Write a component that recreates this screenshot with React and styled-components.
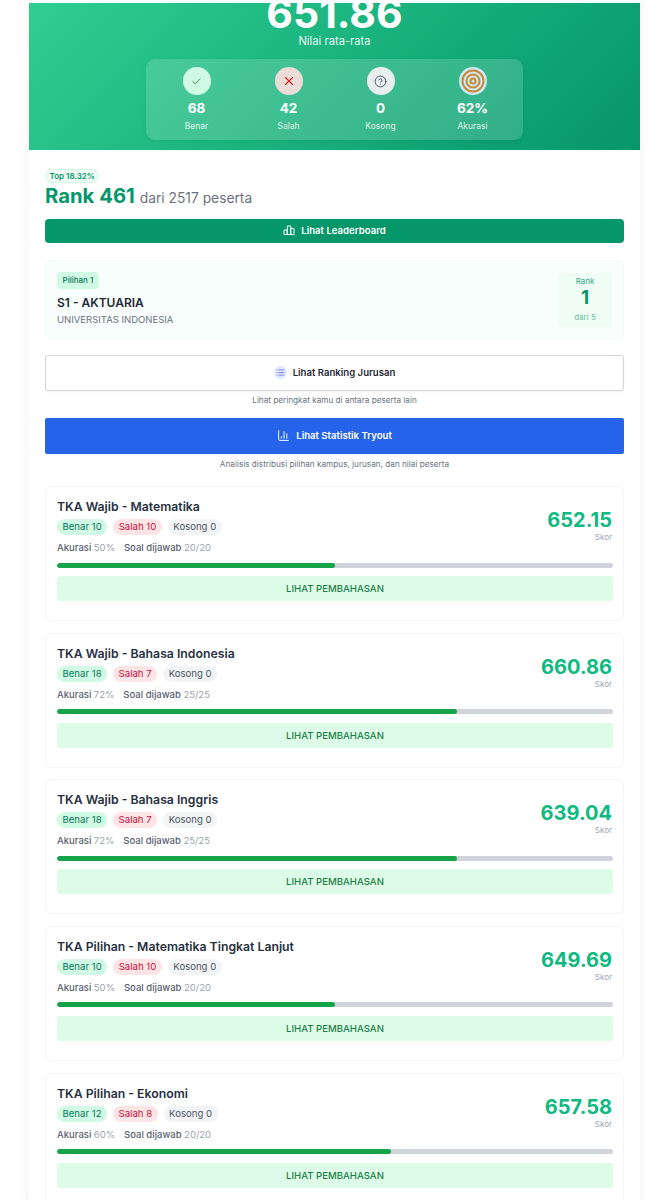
import React from 'react';
import styled, { createGlobalStyle } from 'styled-components';
import { Check, X, CircleHelp, ChartColumn, List } from 'lucide-react';

const GlobalStyle = createGlobalStyle`
  html, body {
    margin: 0;
    padding: 0;
    background: #fff;
    font-family: 'Inter', 'Liberation Sans', sans-serif;
  }
  #root {
    height: 1200px;
    overflow: hidden;
  }
  * {
    box-sizing: border-box;
  }
`;

const Page = styled.div`
  width: 611px;
  margin: 0 auto 0 29px;
  padding-top: 3px;
  background: #fff;
  box-shadow: 0 0 12px rgba(0, 0, 0, 0.06);
`;

const Hero = styled.header`
  height: 147px;
  overflow: hidden;
  background: linear-gradient(135deg, #2fce92 0%, #059669 100%);
  color: #fff;
  text-align: center;
`;

const Average = styled.div`
  margin-top: -10px;
  font-size: 41px;
  line-height: 40px;
  font-weight: 700;
`;

const AverageLabel = styled.div`
  font-size: 11.2px;
  line-height: 16px;
  color: rgba(255, 255, 255, 0.92);
`;

const StatPanel = styled.div`
  display: grid;
  grid-template-columns: repeat(4, 92px);
  justify-content: center;
  width: 377px;
  height: 81px;
  margin: 10px auto 0;
  padding-top: 8px;
  border-radius: 9px;
  background: rgba(255, 255, 255, 0.16);
  box-shadow: 0 2px 6px rgba(0, 0, 0, 0.05);
`;

const Stat = styled.div`
  display: flex;
  flex-direction: column;
  align-items: center;
`;

const StatIcon = styled.div`
  display: flex;
  align-items: center;
  justify-content: center;
  width: 28px;
  height: 28px;
  border-radius: 50%;
  background: ${(p) => p.$bg};
  color: ${(p) => p.$color};
`;

const StatValue = styled.div`
  margin-top: 5px;
  font-size: 13.5px;
  line-height: 16px;
  font-weight: 700;
`;

const StatLabel = styled.div`
  margin-top: 4px;
  font-size: 8.5px;
  line-height: 12px;
  color: rgba(255, 255, 255, 0.85);
`;

const Content = styled.main`
  padding: 19px 16px 0;
`;

const TopBadge = styled.span`
  display: block;
  width: fit-content;
  height: 14px;
  padding: 0 3.5px;
  border: 1px solid #d1fae5;
  border-radius: 7px;
  background: #f0fdf4;
  color: #059669;
  font-size: 8px;
  line-height: 12px;
  font-weight: 600;
`;

const RankLine = styled.div`
  height: 25px;
  margin-top: 1px;
  color: #6b7280;
  font-size: 13.8px;
  line-height: 23px;
  white-space: nowrap;
`;

const RankStrong = styled.strong`
  margin-right: 1px;
  color: #059669;
  font-size: 20.3px;
  font-weight: 700;
`;

const ActionButton = styled.button`
  display: flex;
  align-items: center;
  justify-content: center;
  gap: 6px;
  width: 100%;
  height: ${(p) => p.$height}px;
  margin-top: ${(p) => p.$top || 0}px;
  padding: 0 0 2px;
  border: ${(p) => (p.$outline ? '1px solid #d1d5db' : '0')};
  border-radius: ${(p) => p.$radius}px;
  background: ${(p) => p.$bg};
  color: ${(p) => p.$color};
  font-family: inherit;
  font-size: 9.6px;
  font-weight: 600;
  box-shadow: ${(p) => (p.$outline ? '0 1px 2px rgba(0, 0, 0, 0.06)' : 'none')};
`;

const Choice = styled.section`
  display: flex;
  align-items: center;
  justify-content: space-between;
  height: 79px;
  margin-top: 17px;
  padding: 0 11px;
  border: 1px solid #f0fdf7;
  border-radius: 6px;
  background: #f7fefb;
`;

const ChoiceInfo = styled.div`
  min-width: 0;
`;

const ChoiceTag = styled.span`
  display: block;
  width: fit-content;
  height: 17px;
  padding: 0 4.5px;
  border: 1px solid #d1fae5;
  border-radius: 4px;
  background: #d1fae5;
  color: #047857;
  font-size: 8px;
  line-height: 15px;
  font-weight: 500;
`;

const ChoiceName = styled.div`
  margin-top: 6px;
  color: #1f2937;
  font-size: 12px;
  line-height: 15px;
  font-weight: 600;
`;

const ChoiceCampus = styled.div`
  margin-top: 3px;
  color: #6b7280;
  font-size: 9.5px;
  line-height: 14px;
`;

const RankBox = styled.div`
  width: 54px;
  height: 54px;
  padding-top: 3.5px;
  border-radius: 4px;
  background: #effdf6;
  text-align: center;
`;

const RankBoxLabel = styled.div`
  color: ${(p) => (p.$muted ? '#6fbfa0' : '#34a77f')};
  font-size: 8px;
  line-height: 11px;
`;

const RankBoxValue = styled.div`
  margin-bottom: 2.5px;
  color: #059669;
  font-size: 19px;
  line-height: 22px;
  font-weight: 700;
`;

const IconDot = styled.span`
  display: flex;
  align-items: center;
  justify-content: center;
  width: 13px;
  height: 13px;
  border-radius: 50%;
  background: #e0e7ff;
  color: #6366f1;
`;

const Hint = styled.p`
  margin: ${(p) => p.$top}px 0 0;
  color: #6b7280;
  font-size: 8.2px;
  line-height: 12px;
  text-align: center;
`;

const CardList = styled.div`
  display: flex;
  flex-direction: column;
  gap: 11.67px;
  margin-top: 16px;
`;

const Card = styled.article`
  height: 135px;
  padding: 11px 10px 0 11px;
  border: 1px solid #f3f4f6;
  border-radius: 6px;
  background: #fff;
`;

const CardHead = styled.div`
  display: flex;
  align-items: flex-start;
  justify-content: space-between;
  height: 64.5px;
`;

const CardTitle = styled.h3`
  margin: 0;
  color: #27303f;
  font-size: 12.25px;
  line-height: 17px;
  font-weight: 600;
`;

const Pills = styled.div`
  display: flex;
  gap: 6px;
  margin-top: 4px;
`;

const Pill = styled.span`
  height: 16px;
  padding: 0 5.5px;
  border-radius: 8px;
  background: ${(p) => p.$bg};
  color: ${(p) => p.$color};
  font-size: 9.6px;
  line-height: 16px;
  font-weight: 400;
`;

const Meta = styled.div`
  display: flex;
  gap: 9px;
  margin-top: 5px;
  color: #596270;
  font-size: 9.5px;
  line-height: 16px;
  font-weight: 500;
`;

const MetaValue = styled.span`
  color: #9ca3af;
  font-weight: 400;
`;

const Score = styled.div`
  margin: 10px 1px 0 0;
  text-align: right;
`;

const ScoreValue = styled.div`
  color: #10b981;
  font-size: 20px;
  line-height: 24px;
  font-weight: 700;
`;

const ScoreLabel = styled.div`
  color: #9ca3af;
  font-size: 8px;
  line-height: 11px;
`;

const Track = styled.div`
  height: 5px;
  border-radius: 3px;
  background: #d1d5db;
  overflow: hidden;
`;

const Fill = styled.div`
  height: 100%;
  border-radius: 3px;
  background: #16a34a;
`;

const ReviewButton = styled.button`
  display: block;
  width: 100%;
  height: 25px;
  margin-top: 8.5px;
  padding: 0;
  border: 0;
  border-radius: 4px;
  background: #dcfce7;
  color: #1c8048;
  font-family: inherit;
  font-size: 9.6px;
  font-weight: 500;
`;

const subjects = [
  { title: 'TKA Wajib - Matematika', right: 10, wrong: 10, acc: 50, done: '20/20', score: '652.15' },
  { title: 'TKA Wajib - Bahasa Indonesia', right: 18, wrong: 7, acc: 72, done: '25/25', score: '660.86' },
  { title: 'TKA Wajib - Bahasa Inggris', right: 18, wrong: 7, acc: 72, done: '25/25', score: '639.04' },
  { title: 'TKA Pilihan - Matematika Tingkat Lanjut', right: 10, wrong: 10, acc: 50, done: '20/20', score: '649.69' },
  { title: 'TKA Pilihan - Ekonomi', right: 12, wrong: 8, acc: 60, done: '20/20', score: '657.58' },
];

function TargetIcon() {
  return (
    <svg width="24" height="24" viewBox="0 0 24 24" fill="none" stroke="#c98a34" strokeWidth="2">
      <circle cx="12" cy="12" r="10.5" />
      <circle cx="12" cy="12" r="6.5" />
      <circle cx="12" cy="12" r="2.5" />
    </svg>
  );
}

function LeaderboardIcon() {
  return (
    <svg width="12" height="12" viewBox="0 0 24 24" fill="none" stroke="currentColor" strokeWidth="2">
      <path d="M2 21h20M2 21v-9h6.500v9M8.500 21V4h7v17M15.500 21v-12H22v12" />
    </svg>
  );
}

function SubjectCard({ title, right, wrong, acc, done, score }) {
  return (
    <Card>
      <CardHead>
        <div>
          <CardTitle>{title}</CardTitle>
          <Pills>
            <Pill $bg="#d1fae5" $color="#047857">Benar {right}</Pill>
            <Pill $bg="#ffe4e6" $color="#be123c">Salah {wrong}</Pill>
            <Pill $bg="#f3f4f6" $color="#4b5563">Kosong 0</Pill>
          </Pills>
          <Meta>
            <span>Akurasi <MetaValue>{acc}%</MetaValue></span>
            <span>Soal dijawab <MetaValue>{done}</MetaValue></span>
          </Meta>
        </div>
        <Score>
          <ScoreValue>{score}</ScoreValue>
          <ScoreLabel>Skor</ScoreLabel>
        </Score>
      </CardHead>
      <Track>
        <Fill style={{ width: `${acc}%` }} />
      </Track>
      <ReviewButton>LIHAT PEMBAHASAN</ReviewButton>
    </Card>
  );
}

export default function App() {
  return (
    <>
      <GlobalStyle />
      <Page>
        <Hero>
          <Average>651.86</Average>
          <AverageLabel>Nilai rata-rata</AverageLabel>
          <StatPanel>
            <Stat>
              <StatIcon $bg="#d1fae5" $color="#16a34a"><Check size={11} strokeWidth={2} /></StatIcon>
              <StatValue>68</StatValue>
              <StatLabel>Benar</StatLabel>
            </Stat>
            <Stat>
              <StatIcon $bg="#ecdcd8" $color="#dc2626"><X size={14} strokeWidth={2} /></StatIcon>
              <StatValue>42</StatValue>
              <StatLabel>Salah</StatLabel>
            </Stat>
            <Stat>
              <StatIcon $bg="#e8eeee" $color="#374151"><CircleHelp size={13} strokeWidth={1.6} /></StatIcon>
              <StatValue>0</StatValue>
              <StatLabel>Kosong</StatLabel>
            </Stat>
            <Stat>
              <StatIcon $bg="#cfe8f5"><TargetIcon /></StatIcon>
              <StatValue>62%</StatValue>
              <StatLabel>Akurasi</StatLabel>
            </Stat>
          </StatPanel>
        </Hero>
        <Content>
          <TopBadge>Top 18.32%</TopBadge>
          <RankLine><RankStrong>Rank 461</RankStrong> dari 2517 peserta</RankLine>
          <ActionButton $height={24} $top={10} $radius={4} $bg="#059669" $color="#fff">
            <LeaderboardIcon />
            Lihat Leaderboard
          </ActionButton>
          <Choice>
            <ChoiceInfo>
              <ChoiceTag>Pilihan 1</ChoiceTag>
              <ChoiceName>S1 - AKTUARIA</ChoiceName>
              <ChoiceCampus>UNIVERSITAS INDONESIA</ChoiceCampus>
            </ChoiceInfo>
            <RankBox>
              <RankBoxLabel>Rank</RankBoxLabel>
              <RankBoxValue>1</RankBoxValue>
              <RankBoxLabel $muted>dari 5</RankBoxLabel>
            </RankBox>
          </Choice>
          <ActionButton $outline $height={36} $top={16} $radius={3} $bg="#fff" $color="#1f2937">
            <IconDot><List size={9} strokeWidth={2} /></IconDot>
            Lihat Ranking Jurusan
          </ActionButton>
          <Hint $top={3}>Lihat peringkat kamu di antara peserta lain</Hint>
          <ActionButton $height={36} $top={12} $radius={2} $bg="#2563eb" $color="#fff">
            <ChartColumn size={13} strokeWidth={1.8} />
            Lihat Statistik Tryout
          </ActionButton>
          <Hint $top={4}>Analisis distribusi pilihan kampus, jurusan, dan nilai peserta</Hint>
          <CardList>
            {subjects.map((s) => (
              <SubjectCard key={s.title} {...s} />
            ))}
          </CardList>
        </Content>
      </Page>
    </>
  );
}
